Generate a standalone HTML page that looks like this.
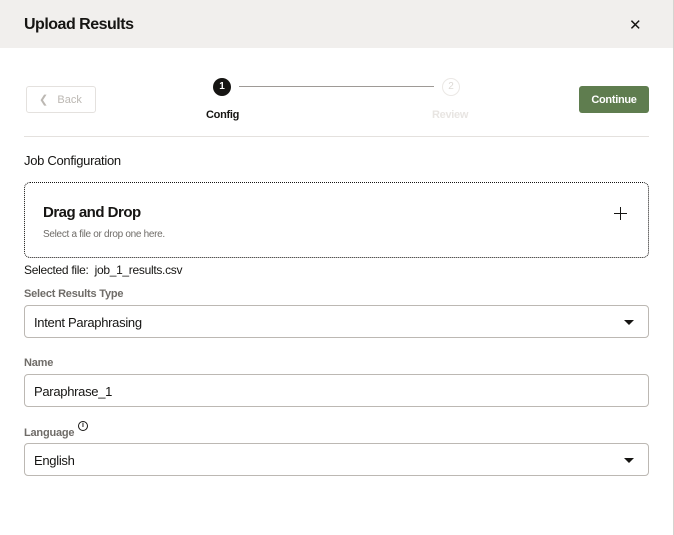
<!DOCTYPE html>
<html><head><style>
*{box-sizing:border-box;margin:0;padding:0}
body{width:674px;height:535px;background:#fff;font-family:"Liberation Sans",sans-serif;color:#161513;position:relative;overflow:hidden}
.a{position:absolute}
.hdr{left:0;top:0;width:674px;height:48px;background:#f1efed}
.inp{left:24px;width:625px;height:33px;border:1px solid #bcb8b3;border-radius:4px;font-size:13px;padding-left:9px;line-height:33px;letter-spacing:-0.3px}
.lbl{font-size:11px;color:#6f6c68;font-weight:bold;letter-spacing:-0.2px}
.tri{right:14px;top:14px;width:0;height:0;border-left:5px solid transparent;border-right:5px solid transparent;border-top:5px solid #161513}
</style></head><body>
<div class="a hdr"></div>
<div class="a" style="right:0;top:0;width:1px;height:535px;background:#d6d3d0"></div>
<div class="a" style="left:24px;top:16px;font-size:16px;font-weight:bold;letter-spacing:-0.5px">Upload Results</div>
<div class="a" style="left:629px;top:16px;font-size:15px">✕</div>
<div class="a" style="left:26px;top:86px;width:70px;height:27px;border:1px solid #e4e1de;border-radius:3px;color:#bcb8b3;font-size:11px;line-height:27px;padding-left:12px">&#10094;&nbsp;&nbsp;&nbsp;Back</div>
<div class="a" style="left:213px;top:78px;width:18px;height:18px;border-radius:50%;background:#161513;color:#fff;font-size:10px;font-weight:bold;text-align:center;line-height:18px">1</div>
<div class="a" style="left:239px;top:86px;width:195px;height:1px;background:#9e9a96"></div>
<div class="a" style="left:442px;top:78px;width:18px;height:18px;border-radius:50%;border:1px solid #ebe8e5;color:#ddd9d5;font-size:10px;text-align:center;line-height:16px">2</div>
<div class="a" style="left:206px;top:109px;font-size:11px;font-weight:bold;letter-spacing:-0.3px">Config</div>
<div class="a" style="left:432px;top:109px;font-size:11px;font-weight:bold;color:#e8e5e2;letter-spacing:-0.3px">Review</div>
<div class="a" style="left:579px;top:86px;width:70px;height:27px;background:#5f7d4f;border-radius:3px;color:#fff;font-size:11px;font-weight:bold;text-align:center;line-height:29px;letter-spacing:-0.3px">Continue</div>
<div class="a" style="left:24px;top:136px;width:625px;height:1px;background:#e4e1de"></div>
<div class="a" style="left:24px;top:153px;font-size:13px;letter-spacing:-0.3px">Job Configuration</div>
<div class="a" style="left:24px;top:182px;width:625px;height:76px;border:1px dotted #161513;border-radius:6px"></div>
<div class="a" style="left:43px;top:204px;font-size:15px;font-weight:bold;letter-spacing:-0.5px">Drag and Drop</div>
<div class="a" style="left:43px;top:229px;font-size:10px;color:#6f6c68;letter-spacing:-0.3px">Select a file or drop one here.</div>
<div class="a" style="left:614px;top:213px;width:13px;height:1px;background:#161513"></div>
<div class="a" style="left:620px;top:207px;width:1px;height:13px;background:#161513"></div>
<div class="a" style="left:24px;top:263px;font-size:12px;letter-spacing:-0.3px">Selected file:&nbsp;&nbsp;job_1_results.csv</div>
<div class="a lbl" style="left:24px;top:288px">Select Results Type</div>
<div class="a inp" style="top:305px">Intent Paraphrasing<div class="a tri"></div></div>
<div class="a lbl" style="left:24px;top:357px">Name</div>
<div class="a inp" style="top:374px">Paraphrase_1</div>
<div class="a lbl" style="left:24px;top:427px">Language</div>
<div class="a" style="left:78px;top:421px;width:10px;height:10px;border:1px solid #161513;border-radius:50%;font-size:7px;text-align:center;line-height:8px;font-weight:bold">i</div>
<div class="a inp" style="top:443px">English<div class="a tri"></div></div>
</body></html>
